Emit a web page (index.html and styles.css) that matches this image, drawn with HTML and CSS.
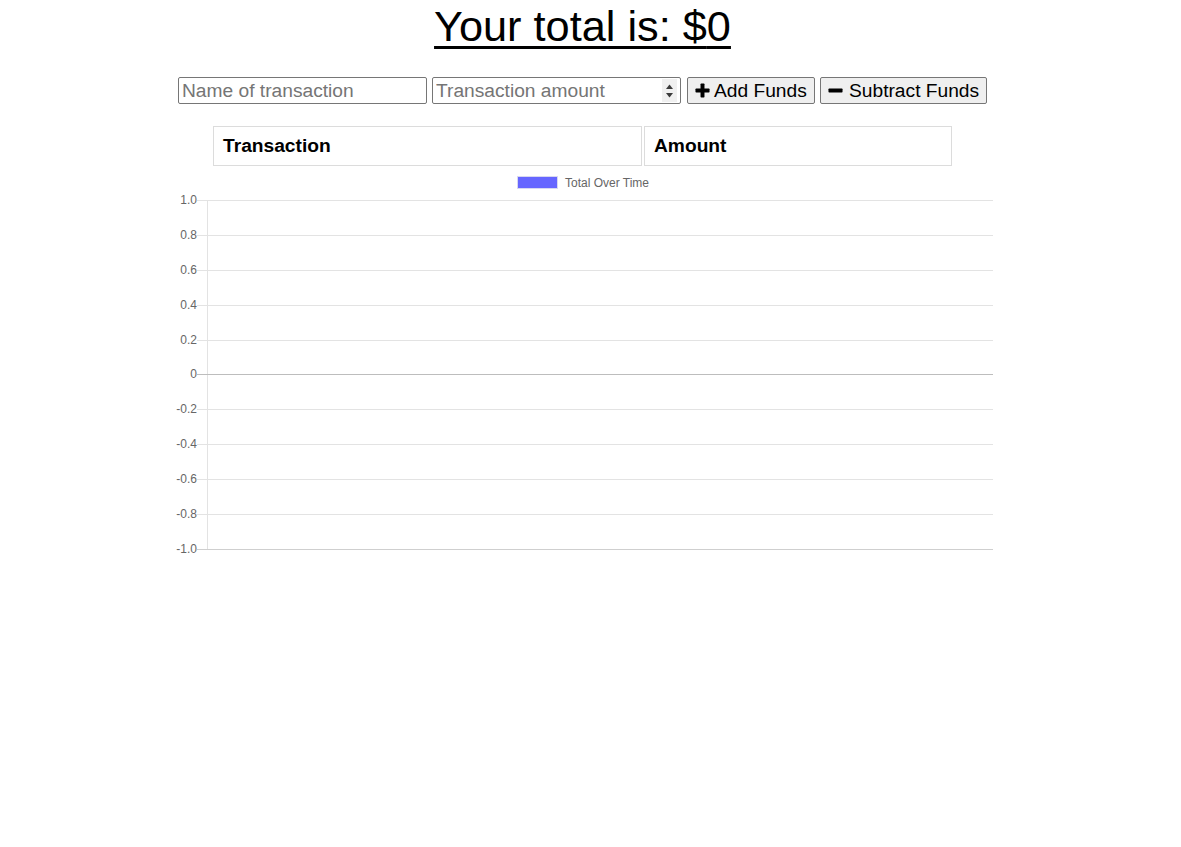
FILE: index.html
```html
<!DOCTYPE html>
<html>
<head>
<meta charset="utf-8">
<title>Budget Tracker</title>
<link rel="stylesheet" href="styles.css">
</head>
<body>
<div class="page">
  <h1 class="total">Your total is: $<span class="total-value">0</span></h1>
  <div class="form-row">
    <input class="field field-name" type="text" placeholder="Name of transaction">
    <div class="amount-wrap">
      <input class="field field-amount" type="number" placeholder="Transaction amount">
      <span class="spinner"><svg viewBox="0 0 15 23" width="15" height="23"><path d="M4 10 L7.5 5.5 L11 10 Z" fill="#3a3a3a"/><path d="M4 14 L7.5 18.5 L11 14 Z" fill="#3a3a3a"/></svg></span>
    </div>
    <button class="btn btn-add"><svg class="icon" viewBox="0 0 16 16" width="15" height="15"><rect x="5.9" y="0.5" width="4.2" height="15" rx="0.8" fill="#000"/><rect x="0.5" y="5.9" width="15" height="4.2" rx="0.8" fill="#000"/></svg>Add Funds</button>
    <button class="btn btn-sub"><svg class="icon" viewBox="0 0 16 16" width="15" height="15"><rect x="0.5" y="5.9" width="15" height="4.2" rx="0.8" fill="#000"/></svg>Subtract Funds</button>
  </div>
  <table class="tx-table">
    <thead>
      <tr><th class="col-name">Transaction</th><th class="col-amount">Amount</th></tr>
    </thead>
    <tbody></tbody>
  </table>
  <svg class="chart" width="820" height="388" viewBox="0 0 820 388">
    <rect x="344.5" y="4.5" width="40" height="12" fill="#6666ff" stroke="#d8d8f0" stroke-width="1"/>
    <text class="legend" x="392" y="14.5">Total Over Time</text>
    <line x1="34.5" y1="28" x2="34.5" y2="377" stroke="#e3e3e3" stroke-width="1"/>
    <g stroke="#e3e3e3" stroke-width="1">
      <line x1="24" y1="28.5" x2="820" y2="28.5"/>
      <line x1="24" y1="63.5" x2="820" y2="63.5"/>
      <line x1="24" y1="98.5" x2="820" y2="98.5"/>
      <line x1="24" y1="133.5" x2="820" y2="133.5"/>
      <line x1="24" y1="168.5" x2="820" y2="168.5"/>
      <line x1="24" y1="237.5" x2="820" y2="237.5"/>
      <line x1="24" y1="272.5" x2="820" y2="272.5"/>
      <line x1="24" y1="307.5" x2="820" y2="307.5"/>
      <line x1="24" y1="342.5" x2="820" y2="342.5"/>
    </g>
    <line x1="24" y1="202.5" x2="820" y2="202.5" stroke="#bdbdbd" stroke-width="1"/>
    <line x1="24" y1="377.5" x2="820" y2="377.5" stroke="#cfcfcf" stroke-width="1"/>
    <g class="ticks">
      <text x="24" y="32">1.0</text>
      <text x="24" y="67">0.8</text>
      <text x="24" y="102">0.6</text>
      <text x="24" y="137">0.4</text>
      <text x="24" y="172">0.2</text>
      <text x="24" y="206">0</text>
      <text x="24" y="241">-0.2</text>
      <text x="24" y="276">-0.4</text>
      <text x="24" y="311">-0.6</text>
      <text x="24" y="346">-0.8</text>
      <text x="24" y="381">-1.0</text>
    </g>
  </svg>
</div>
</body>
</html>
```
FILE: styles.css
```css
html, body {
  background: #fff;
}
body {
  margin: 0 24px 8px 8px;
  font-family: "Liberation Sans", Arial, sans-serif;
  color: #000;
}
.page {
  display: flex;
  flex-direction: column;
  align-items: center;
}
.total {
  margin: 2px 0 0 0;
  font-size: 43.3px;
  font-weight: normal;
  line-height: 48px;
  text-decoration: underline;
  text-decoration-thickness: 3px;
  text-underline-offset: 5px;
  text-decoration-skip-ink: auto;
}
.form-row {
  display: flex;
  align-items: center;
  margin-top: 27px;
  height: 27px;
}
.field {
  box-sizing: border-box;
  height: 27px;
  width: 249px;
  font-family: "Liberation Sans", Arial, sans-serif;
  font-size: 19.2px;
  padding: 1px 3px;
  border: 1px solid #767676;
  border-radius: 2px;
  color: #000;
  background: #fff;
  margin: 0;
}
.field::placeholder {
  color: #757575;
}
.amount-wrap {
  position: relative;
  margin-left: 5px;
  height: 27px;
}
.field-amount {
  display: block;
  padding-right: 22px;
  -moz-appearance: textfield;
}
.field-amount::-webkit-inner-spin-button,
.field-amount::-webkit-outer-spin-button {
  -webkit-appearance: none;
  margin: 0;
}
.spinner {
  position: absolute;
  right: 4px;
  top: 2px;
  width: 15px;
  height: 23px;
  background: #f0f0f0;
  display: block;
}
.spinner svg {
  display: block;
}
.btn {
  box-sizing: border-box;
  height: 27px;
  display: inline-flex;
  align-items: center;
  gap: 4px;
  white-space: nowrap;
  font-family: "Liberation Sans", Arial, sans-serif;
  font-size: 19.2px;
  padding: 0 7px;
  border: 1px solid #767676;
  border-radius: 2px;
  background: #efefef;
  color: #000;
  margin: 0;
}
.btn-add {
  width: 128px;
  margin-left: 6px;
  padding-left: 7px;
}
.btn-sub {
  width: 167px;
  margin-left: 5px;
  padding: 0 4px 0 7px;
  gap: 6px;
}
.icon {
  display: block;
  flex: none;
}
.tx-table {
  margin-top: 20px;
  border-spacing: 2px;
  border-collapse: separate;
}
.tx-table th {
  box-sizing: border-box;
  height: 40px;
  text-align: left;
  font-size: 19.2px;
  font-weight: bold;
  padding: 8px 9px;
  border: 1px solid #dcdcdc;
}
.col-name {
  width: 429px;
}
.col-amount {
  width: 308px;
}
.chart {
  display: block;
  margin-top: 4px;
  font-family: "Liberation Sans", Arial, sans-serif;
}
.chart .legend {
  font-size: 12px;
  fill: #666;
}
.chart .ticks text {
  font-size: 12px;
  fill: #666;
  text-anchor: end;
}
```
